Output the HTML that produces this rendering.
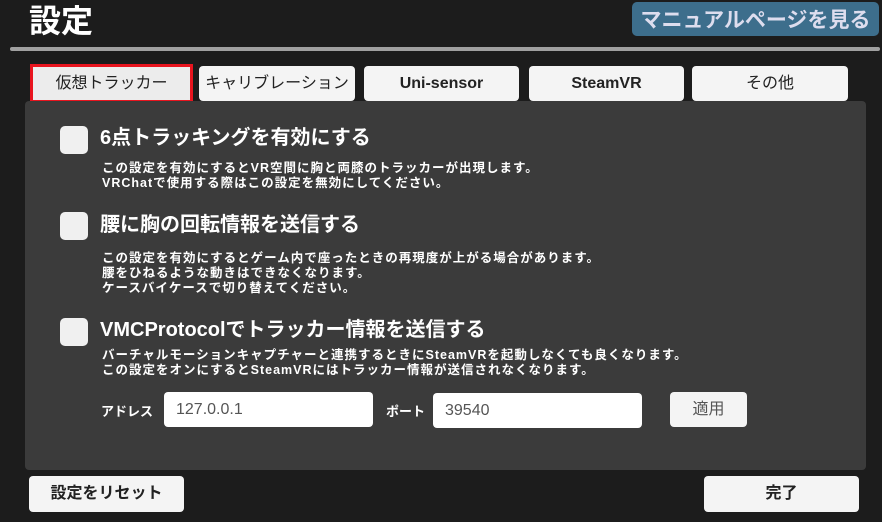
<!DOCTYPE html>
<html><head><meta charset="utf-8"><style>
*{margin:0;padding:0;box-sizing:border-box}
body{width:882px;height:522px;background:#1c1c1c;position:relative;overflow:hidden;font-family:"Liberation Sans","Noto Sans CJK JP",sans-serif;color:#fff}
.a{position:absolute}
.btn{position:absolute;background:#f4f4f4;border-radius:4px;color:#222;display:flex;align-items:center;justify-content:center;font-size:16px;font-weight:bold;line-height:1}
.cb{position:absolute;left:60px;width:28px;height:28px;background:#f0f0f0;border-radius:5px}
.h{position:absolute;left:100px;font-size:20px;font-weight:bold;white-space:nowrap;line-height:24px}
.d{position:absolute;left:102px;font-size:12.5px;line-height:15px;font-weight:bold;white-space:nowrap;letter-spacing:1px}
.in{position:absolute;background:#fff;border-radius:4px;color:#555;font-size:16px;padding-left:12px;display:flex;align-items:center}
</style></head><body>
<div class="a" style="left:29px;top:0px;font-size:32px;font-weight:bold;line-height:42px">設定</div>
<div class="a" style="left:632px;top:2px;width:247px;height:34px;background:#3d6e8c;border-radius:5px;color:#dde;font-size:21px;font-weight:bold;display:flex;align-items:center;justify-content:center">マニュアルページを見る</div>
<div class="a" style="left:10px;top:47px;width:870px;height:4px;background:#a0a0a0;border-radius:2px"></div>
<div class="btn" style="left:30px;top:64px;width:163px;height:39px;border:3px solid #e8141e;background:#ececec;border-radius:0;font-weight:normal">仮想トラッカー</div>
<div class="btn" style="left:199px;top:66px;width:156px;height:35px;font-weight:normal">キャリブレーション</div>
<div class="btn" style="left:364px;top:66px;width:155px;height:35px">Uni-sensor</div>
<div class="btn" style="left:529px;top:66px;width:155px;height:35px">SteamVR</div>
<div class="btn" style="left:692px;top:66px;width:156px;height:35px;font-weight:normal">その他</div>
<div class="a" style="left:25px;top:101px;width:841px;height:369px;background:#3b3b3b;border-radius:4px"></div>
<div class="cb" style="top:126px"></div>
<div class="h" style="top:126px">6点トラッキングを有効にする</div>
<div class="d" style="top:161px">この設定を有効にするとVR空間に胸と両膝のトラッカーが出現します。<br>VRChatで使用する際はこの設定を無効にしてください。</div>
<div class="cb" style="top:212px"></div>
<div class="h" style="top:213px">腰に胸の回転情報を送信する</div>
<div class="d" style="top:251px">この設定を有効にするとゲーム内で座ったときの再現度が上がる場合があります。<br>腰をひねるような動きはできなくなります。<br>ケースバイケースで切り替えてください。</div>
<div class="cb" style="top:318px"></div>
<div class="h" style="top:318px">VMCProtocolでトラッカー情報を送信する</div>
<div class="d" style="top:348px">バーチャルモーションキャプチャーと連携するときにSteamVRを起動しなくても良くなります。<br>この設定をオンにするとSteamVRにはトラッカー情報が送信されなくなります。</div>
<div class="a" style="left:101px;top:401px;font-size:13px;font-weight:bold">アドレス</div>
<div class="in" style="left:164px;top:392px;width:209px;height:35px">127.0.0.1</div>
<div class="a" style="left:386px;top:401px;font-size:13px;font-weight:bold">ポート</div>
<div class="in" style="left:433px;top:393px;width:209px;height:35px">39540</div>
<div class="btn" style="left:670px;top:392px;width:77px;height:35px;font-weight:normal;color:#555">適用</div>
<div class="btn" style="left:29px;top:476px;width:155px;height:36px">設定をリセット</div>
<div class="btn" style="left:704px;top:476px;width:155px;height:36px">完了</div>
</body></html>
